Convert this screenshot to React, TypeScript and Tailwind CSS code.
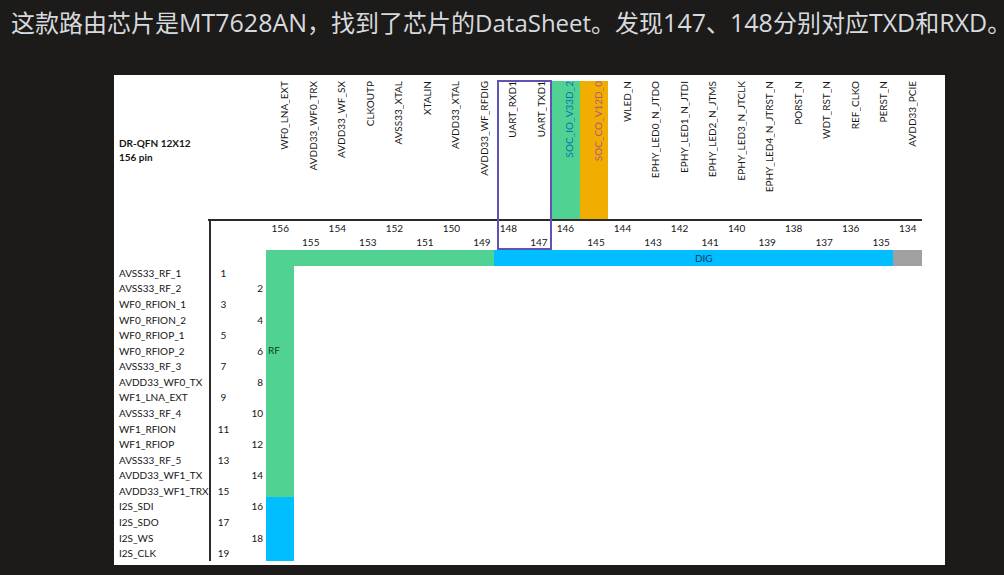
type TopPin = { pin: number; name: string; cell?: string; text?: string };

const topPins: TopPin[] = [
  { pin: 156, name: "WF0_LNA_EXT" },
  { pin: 155, name: "AVDD33_WF0_TRX" },
  { pin: 154, name: "AVDD33_WF_SX" },
  { pin: 153, name: "CLKOUTP" },
  { pin: 152, name: "AVSS33_XTAL" },
  { pin: 151, name: "XTALIN" },
  { pin: 150, name: "AVDD33_XTAL" },
  { pin: 149, name: "AVDD33_WF_RFDIG" },
  { pin: 148, name: "UART_RXD1" },
  { pin: 147, name: "UART_TXD1" },
  { pin: 146, name: "SOC_IO_V33D_2", cell: "bg-[#50d392]", text: "text-[#0a6fb8]" },
  { pin: 145, name: "SOC_CO_V12D_0", cell: "bg-[#f2ae00]", text: "text-[#b05a7a]" },
  { pin: 144, name: "WLED_N" },
  { pin: 143, name: "EPHY_LED0_N_JTDO" },
  { pin: 142, name: "EPHY_LED1_N_JTDI" },
  { pin: 141, name: "EPHY_LED2_N_JTMS" },
  { pin: 140, name: "EPHY_LED3_N_JTCLK" },
  { pin: 139, name: "EPHY_LED4_N_JTRST_N" },
  { pin: 138, name: "PORST_N" },
  { pin: 137, name: "WDT_RST_N" },
  { pin: 136, name: "REF_CLKO" },
  { pin: 135, name: "PERST_N" },
  { pin: 134, name: "AVDD33_PCIE" },
];

const leftPins: string[] = [
  "AVSS33_RF_1",
  "AVSS33_RF_2",
  "WF0_RFION_1",
  "WF0_RFION_2",
  "WF0_RFIOP_1",
  "WF0_RFIOP_2",
  "AVSS33_RF_3",
  "AVDD33_WF0_TX",
  "WF1_LNA_EXT",
  "AVSS33_RF_4",
  "WF1_RFION",
  "WF1_RFIOP",
  "AVSS33_RF_5",
  "AVDD33_WF1_TX",
  "AVDD33_WF1_TRX",
  "I2S_SDI",
  "I2S_SDO",
  "I2S_WS",
  "I2S_CLK",
];

function LeftPinTable() {
  return (
    <table className="w-full table-fixed border-collapse leading-none">
      <colgroup>
        <col className="w-[96px]" />
        <col className="w-[26px]" />
        <col />
      </colgroup>
      <tbody>
        <tr className="h-[44px]" aria-hidden="true">
          <td className="border-r-2 border-[#2e2a2c] p-0" />
          <td className="p-0" />
          <td className="p-0" />
        </tr>
      </tbody>
      <tbody className="h-[296px]">
        {leftPins.map((name, i) => {
          const pin = i + 1;
          return (
            <tr key={name}>
              <th
                scope="row"
                className="whitespace-nowrap border-r-2 border-[#2e2a2c] p-0 pl-[5px] text-left font-normal"
              >
                {name}
              </th>
              <td className="p-0 text-center">{pin % 2 === 1 ? pin : ""}</td>
              <td className="p-0 pr-[3px] text-right">{pin % 2 === 0 ? pin : ""}</td>
            </tr>
          );
        })}
      </tbody>
    </table>
  );
}

function TopPins() {
  return (
    <div className="relative">
      <div className="grid h-[138px] grid-cols-[repeat(23,minmax(0,1fr))]">
        {topPins.map(({ pin, name, cell = "", text = "" }) => (
          <div key={pin} className={`flex items-start justify-center pl-[8px] ${cell}`}>
            <span
              className={`rotate-180 whitespace-nowrap leading-none [writing-mode:vertical-rl] ${text}`}
            >
              {name}
            </span>
          </div>
        ))}
      </div>
      <div className="h-[2px] bg-[#2e2a2c]" />
      <div className="grid h-[29px] grid-cols-[repeat(23,minmax(0,1fr))] leading-[15px]">
        {topPins.map(({ pin }) => (
          <span
            key={pin}
            className={pin % 2 === 0 ? "text-center" : "self-end pl-[4px] text-center"}
          >
            {pin}
          </span>
        ))}
      </div>
      <div className="absolute -top-px bottom-0 left-[35.2%] w-[8.4%] border-2 border-[#5f53b5]" />
    </div>
  );
}

function PinoutDiagram() {
  return (
    <figure className="flex bg-white pb-[4px] pr-[23px] pt-[6px] font-['Lato','Liberation_Sans',sans-serif] text-[10px] text-[#161616]">
      <div className="w-[152px] shrink-0">
        <figcaption className="h-[138px] pl-[5px] pt-[55px] font-bold leading-[14px]">
          DR-QFN 12X12
          <br />
          156 pin
        </figcaption>
        <div className="ml-[94px] h-[2px] bg-[#2e2a2c]" />
        <LeftPinTable />
      </div>
      <div className="flex min-w-0 flex-1 flex-col">
        <TopPins />
        <div className="grid h-[16px] grid-cols-[repeat(23,minmax(0,1fr))] leading-[16px]">
          <div className="col-span-8 bg-[#50d392]" />
          <div className="col-span-14 bg-[#00beff] pl-[20px] text-center text-[#0c3a54]">DIG</div>
          <div className="bg-[#a0a0a0]" />
        </div>
        <div className="flex w-[28px] flex-1 flex-col">
          <div className="flex-1 bg-[#50d392] pl-[2px] pt-[76px] leading-[16px] text-[#0c4424]">RF</div>
          <div className="h-[64px] bg-[#00beff]" />
        </div>
      </div>
    </figure>
  );
}

export default function App() {
  return (
    <main className="min-h-screen overflow-x-hidden bg-[#1c1b19] pb-[10px]">
      <p className="whitespace-nowrap pl-[11px] pt-[4px] font-['Open_Sans','Noto_Sans_CJK_SC',sans-serif] text-[24px] leading-[36px] text-[#d6dade]">
        这款路由芯片是<span className="text-[25px]">MT7628AN</span>，找到了芯片的DataSheet。发现
        <span className="text-[25px]">147</span>、<span className="text-[25px]">148</span>分别对应
        <span className="text-[25px]">TXD</span>和<span className="text-[25px]">RXD</span>。
      </p>
      <div className="pl-[114px] pr-[59px] pt-[34px]">
        <PinoutDiagram />
      </div>
    </main>
  );
}
